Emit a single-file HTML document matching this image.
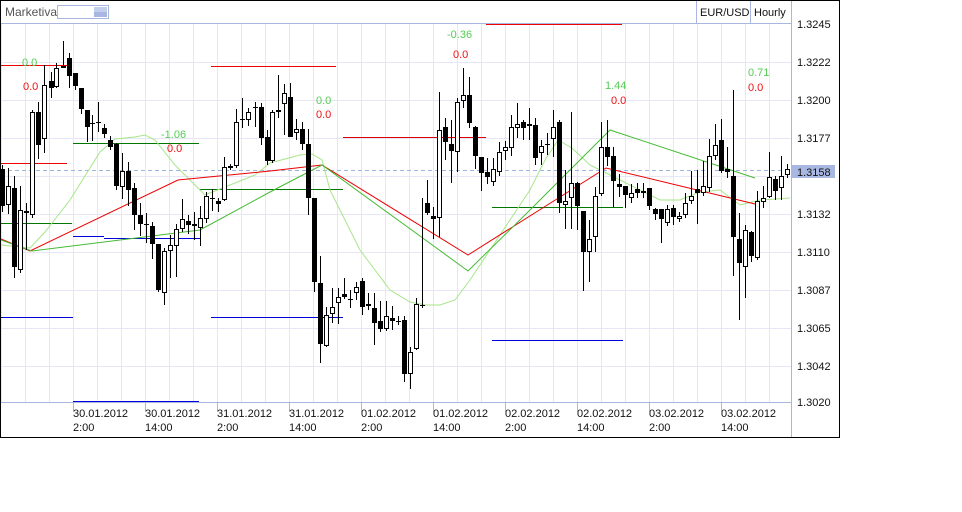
<!DOCTYPE html>
<html><head><meta charset="utf-8">
<style>
html,body{margin:0;padding:0;background:#fff;width:962px;height:512px;overflow:hidden}
svg{display:block;font-family:"Liberation Sans",sans-serif}
</style></head>
<body>
<svg id="s" width="962" height="512" xmlns="http://www.w3.org/2000/svg" shape-rendering="crispEdges">
<rect x="0" y="0" width="962" height="512" fill="#fff"/>
<g id="grid" stroke="#e6e6f6" stroke-width="1"></g>
<!-- dashed current price -->
<line x1="1" y1="170.5" x2="791" y2="170.5" stroke="#9fb4e0" stroke-dasharray="4,3"/>
<g id="hl" stroke-width="1"></g>
<g id="zig" fill="none" stroke-width="1" shape-rendering="auto"></g>
<g id="cd"></g>
<g font-size="11">
<text x="22" y="66" fill="#55cc55">0.0</text>
<text x="23" y="90" fill="#ee1111">0.0</text>
<text x="161" y="138" fill="#55cc55">-1.06</text>
<text x="167" y="152" fill="#ee1111">0.0</text>
<text x="316" y="104" fill="#55cc55">0.0</text>
<text x="316" y="118" fill="#ee1111">0.0</text>
<text x="447" y="38" fill="#55cc55">-0.36</text>
<text x="453" y="58" fill="#ee1111">0.0</text>
<text x="605" y="89" fill="#55cc55">1.44</text>
<text x="611" y="104" fill="#ee1111">0.0</text>
<text x="748" y="76" fill="#55cc55">0.71</text>
<text x="748" y="91" fill="#ee1111">0.0</text>
</g>
<!-- header -->
<rect x="1" y="1" width="838" height="22" fill="#fff"/>
<line x1="1" y1="23.5" x2="791" y2="23.5" stroke="#aab6e0"/>
<text x="5" y="16" font-size="12" fill="#555">Marketiva</text>
<rect x="57.5" y="5.5" width="51" height="13" fill="#fff" stroke="#a9b7e0"/>
<rect x="94" y="7" width="13" height="5" fill="#c4cfee"/>
<rect x="94" y="12" width="13" height="5" fill="#a8b6e2"/>
<line x1="696.5" y1="1" x2="696.5" y2="23" stroke="#aab6e0"/>
<line x1="750.5" y1="1" x2="750.5" y2="23" stroke="#aab6e0"/>
<text x="700" y="16" font-size="11" fill="#111">EUR/USD</text>
<text x="754" y="16" font-size="11" fill="#111">Hourly</text>
<!-- axes -->
<line x1="791.5" y1="1" x2="791.5" y2="437" stroke="#aab6e0"/>
<line x1="1" y1="402.5" x2="791" y2="402.5" stroke="#aab6e0"/>
<g id="ax" font-size="11" fill="#111"></g>
<rect x="792" y="165" width="43" height="13" fill="#a8b8e2"/>
<text x="797" y="176" font-size="11" fill="#111">1.3158</text>
<!-- border -->
<rect x="0.5" y="0.5" width="839" height="437" fill="none" stroke="#000"/>
</svg>
<script>
var NS="http://www.w3.org/2000/svg";
function el(p,t,a,txt){var e=document.createElementNS(NS,t);for(var k in a)e.setAttribute(k,a[k]);if(txt!=null)e.textContent=txt;document.getElementById(p).appendChild(e);return e;}
// grid
for(var x=1;x<791;x+=24)el("grid","line",{x1:x+.5,y1:24,x2:x+.5,y2:402});
var gy=[62,100,138,176,214,252,290,328,366];
gy.forEach(function(y){el("grid","line",{x1:1,y1:y+.5,x2:791,y2:y+.5});});
// axis labels
var pr=[["1.3245",28],["1.3222",66],["1.3200",104],["1.3177",142],["1.3132",218],["1.3110",256],["1.3087",294],["1.3065",332],["1.3042",370],["1.3020",406]];
pr.forEach(function(p){el("ax","text",{x:797,y:p[1]},p[0]);});
var d=[["30.01.2012","2:00"],["30.01.2012","14:00"],["31.01.2012","2:00"],["31.01.2012","14:00"],["01.02.2012","2:00"],["01.02.2012","14:00"],["02.02.2012","2:00"],["02.02.2012","14:00"],["03.02.2012","2:00"],["03.02.2012","14:00"]];
d.forEach(function(v,i){var x=73+72*i;el("ax","line",{x1:x+.5,y1:402,x2:x+.5,y2:412,stroke:"#aab6e0"});el("ax","text",{x:x,y:417},v[0]);el("ax","text",{x:x,y:431},v[1]);});
// horizontal levels
var H=[["#ee0000",0,72,65],["#ee0000",0,67,163],["#ee0000",211,336,66],["#dd0000",343,486,137],["#ee0000",486,622,24],
["#007700",73,199,143],["#007700",199,343,189],["#007700",0,72,223],["#007700",492,623,207],
["#0000dd",0,73,317],["#0000dd",211,343,317],["#0000dd",73,199,401],["#0000dd",73,104,236],["#0000dd",104,200,238],["#0000dd",492,623,340]];
H.forEach(function(h){el("hl","line",{x1:h[1],y1:h[3]+.5,x2:h[2],y2:h[3]+.5,stroke:h[0]});});
// zigzags
function pl(c,pts){el("zig","polyline",{points:pts.map(function(p){return p.join(",")}).join(" "),stroke:c});}
pl("#a6e68a",[[1,245],[30,248],[45,232],[70,200],[100,152],[115,139],[135,137],[145,135],[155,140],[175,165],[190,180],[205,195],[230,185],[255,175],[270,163],[300,155],[312,154],[322,160],[330,190],[360,250],[390,290],[410,302],[425,305],[440,305],[455,300],[470,280],[490,250],[510,220],[530,190],[545,160],[558,140],[572,148],[590,165],[600,170],[620,180],[660,200],[680,200],[700,192],[720,190],[740,205],[760,200],[790,198]]);
pl("#ee0000",[[1,239],[30,251],[178,180],[270,171],[322,165],[468,255],[606,168],[755,204]]);
pl("#44bb33",[[1,240],[32,251],[200,230],[270,192],[322,165],[420,236],[468,271],[530,210],[610,130],[755,178]]);
// candles: x, hi, lo, top, bot, type
var C=[[2,165,212,169,206,"b"],[8,168,214,186,205,"w"],[14,176,278,188,267,"b"],[20,186,273,210,270,"w"],[26,203,250,211,213,"b"],[32,110,218,112,215,"w"],[38,102,159,112,145,"b"],[44,65,153,85,139,"w"],[51,72,98,81,88,"b"],[56,63,88,68,87,"w"],[63,41,68,66,68,"b"],[69,53,88,58,76,"b"],[75,73,90,73,86,"b"],[81,88,114,88,109,"b"],[87,110,142,110,127,"b"],[92,115,141,123,123,"c"],[98,102,132,122,123,"c"],[104,124,138,128,134,"b"],[110,136,150,140,147,"b"],[116,143,190,144,186,"b"],[122,153,199,171,187,"w"],[128,162,206,171,190,"b"],[134,183,230,188,215,"b"],[140,203,236,215,224,"b"],[146,213,243,224,224,"c"],[152,222,259,226,244,"b"],[158,244,292,244,290,"b"],[164,248,305,251,293,"w"],[170,235,278,245,251,"w"],[176,224,277,229,246,"w"],[182,199,232,219,229,"w"],[188,215,234,221,225,"b"],[194,212,240,224,226,"b"],[200,206,246,218,228,"w"],[206,192,223,196,219,"w"],[212,189,211,198,198,"c"],[218,198,212,201,204,"b"],[224,157,201,167,200,"w"],[230,164,170,166,168,"w"],[236,109,168,122,166,"w"],[242,98,128,119,119,"c"],[248,108,126,112,120,"w"],[255,102,127,107,107,"c"],[261,103,145,107,138,"b"],[267,130,165,137,161,"b"],[272,110,163,112,161,"w"],[278,75,118,110,112,"w"],[284,84,135,93,104,"w"],[290,83,137,97,137,"b"],[296,119,140,129,133,"w"],[302,122,150,129,144,"b"],[308,129,215,144,198,"b"],[314,198,292,198,282,"b"],[320,256,363,283,344,"b"],[326,307,347,315,346,"w"],[332,288,323,307,314,"w"],[338,288,324,297,303,"w"],[344,278,299,294,297,"b"],[350,290,308,299,299,"c"],[356,282,300,287,293,"w"],[362,278,315,281,307,"b"],[368,293,310,304,306,"b"],[374,293,345,308,323,"b"],[380,301,332,321,329,"b"],[386,301,331,316,329,"w"],[392,306,330,318,321,"b"],[398,316,325,321,321,"c"],[404,316,382,320,374,"b"],[410,347,389,352,374,"w"],[416,298,350,304,349,"w"],[422,198,308,305,305,"c"],[427,180,215,203,213,"b"],[433,207,239,216,219,"b"],[439,92,237,130,218,"w"],[445,118,160,127,142,"b"],[451,120,183,144,151,"b"],[457,98,172,102,152,"w"],[463,68,108,95,101,"w"],[469,77,128,95,123,"b"],[475,126,169,127,156,"b"],[481,157,191,157,173,"b"],[487,158,184,172,177,"b"],[493,158,186,169,182,"w"],[499,142,176,152,172,"w"],[505,141,160,147,151,"w"],[511,115,156,127,148,"w"],[517,103,138,124,128,"w"],[523,120,140,122,128,"b"],[529,108,140,124,126,"w"],[535,118,165,125,158,"b"],[541,140,165,146,153,"w"],[547,133,155,144,144,"c"],[553,110,157,127,139,"w"],[559,120,213,122,203,"b"],[565,170,229,201,205,"w"],[571,112,229,183,198,"w"],[577,182,230,183,206,"b"],[583,211,291,211,252,"b"],[589,220,282,239,252,"w"],[595,187,252,196,237,"w"],[601,122,196,147,194,"w"],[607,120,166,147,157,"b"],[613,147,207,156,181,"b"],[619,174,197,184,187,"b"],[625,186,208,186,195,"b"],[631,184,203,193,198,"w"],[637,183,198,189,193,"b"],[643,183,198,191,193,"w"],[649,188,210,188,206,"b"],[655,208,220,209,214,"b"],[661,209,243,209,219,"b"],[667,205,226,209,223,"w"],[673,205,225,208,217,"b"],[679,212,222,216,219,"w"],[685,193,218,203,215,"w"],[691,171,204,196,201,"w"],[697,170,224,189,193,"b"],[703,161,196,186,193,"w"],[709,139,192,156,188,"w"],[715,124,160,145,156,"w"],[721,119,173,140,171,"b"],[727,147,178,169,172,"b"],[733,90,276,176,237,"b"],[739,213,320,239,263,"b"],[745,225,298,230,267,"w"],[751,231,262,232,256,"b"],[757,191,260,201,258,"w"],[763,186,208,198,202,"w"],[769,152,198,177,197,"w"],[775,176,200,179,191,"b"],[781,156,200,176,188,"w"],[787,164,178,169,175,"w"]];
C.forEach(function(c){var x=c[0];
 el("cd","line",{x1:x+.5,y1:c[1],x2:x+.5,y2:c[2],stroke:"#000"});
 if(c[5]=="c"){el("cd","line",{x1:x-2,y1:c[3]+.5,x2:x+3,y2:c[3]+.5,stroke:"#000"});}
 else if(c[5]=="b"){el("cd","rect",{x:x-2,y:c[3],width:5,height:Math.max(2,c[4]-c[3]),fill:"#000"});}
 else{el("cd","rect",{x:x-1.5,y:c[3]+.5,width:4,height:Math.max(1,c[4]-c[3]-1),fill:"#fff",stroke:"#000"});}
});
</script>
</body></html>
